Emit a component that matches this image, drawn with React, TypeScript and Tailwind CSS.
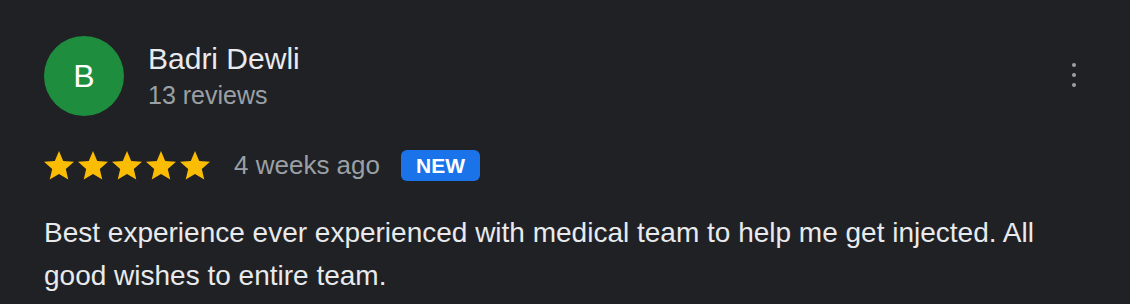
import React from 'react';

const Star = () => (
  <svg viewBox="2 2 20 19" className="h-[28.5px] w-[30px]" fill="#fbbc04">
    <path d="M12 17.27L18.18 21l-1.64-7.03L22 9.24l-7.19-.61L12 2 9.19 8.63 2 9.24l5.46 4.73L5.82 21z" />
  </svg>
);

const ReviewCard = () => {
  return (
    <div
      className="h-[304px] w-full bg-[#202124] px-[44px] pt-[36px]"
      style={{ fontFamily: '"Liberation Sans", Arial, sans-serif' }}
    >
      <div className="flex items-start">
        <div className="flex h-[80px] w-[80px] shrink-0 items-center justify-center rounded-full bg-[#1e8e3e] text-[32px] text-white">
          B
        </div>
        <div className="ml-[24px] mt-[6px]">
          <div className="text-[30px] leading-[34px] text-[#e8eaed]">Badri Dewli</div>
          <div className="mt-[2px] text-[25px] leading-[34px] text-[#9aa0a6]">13 reviews</div>
        </div>
        <svg viewBox="0 0 24 24" className="ml-auto mt-[27px] h-[24px] w-[24px]" fill="#9aa0a6">
          <circle cx="12" cy="2" r="2" />
          <circle cx="12" cy="12" r="2" />
          <circle cx="12" cy="22" r="2" />
        </svg>
      </div>

      <div className="mt-[34px] flex h-[31px] items-center">
        <div className="flex gap-[4px]">
          {[0, 1, 2, 3, 4].map((i) => (
            <Star key={i} />
          ))}
        </div>
        <span className="ml-[24px] text-[26px] text-[#9aa0a6]">4 weeks ago</span>
        <span className="ml-[21px] flex h-[31px] items-center rounded-[6px] bg-[#1a73e8] px-[15px] text-[21px] font-bold text-white">
          NEW
        </span>
      </div>

      <p className="mt-[30px] text-[28px] leading-[43px] text-[#e8eaed]">
        Best experience ever experienced with medical team to help me get injected. All good wishes to entire team.
      </p>
    </div>
  );
};

export default function App() {
  return <ReviewCard />;
}
